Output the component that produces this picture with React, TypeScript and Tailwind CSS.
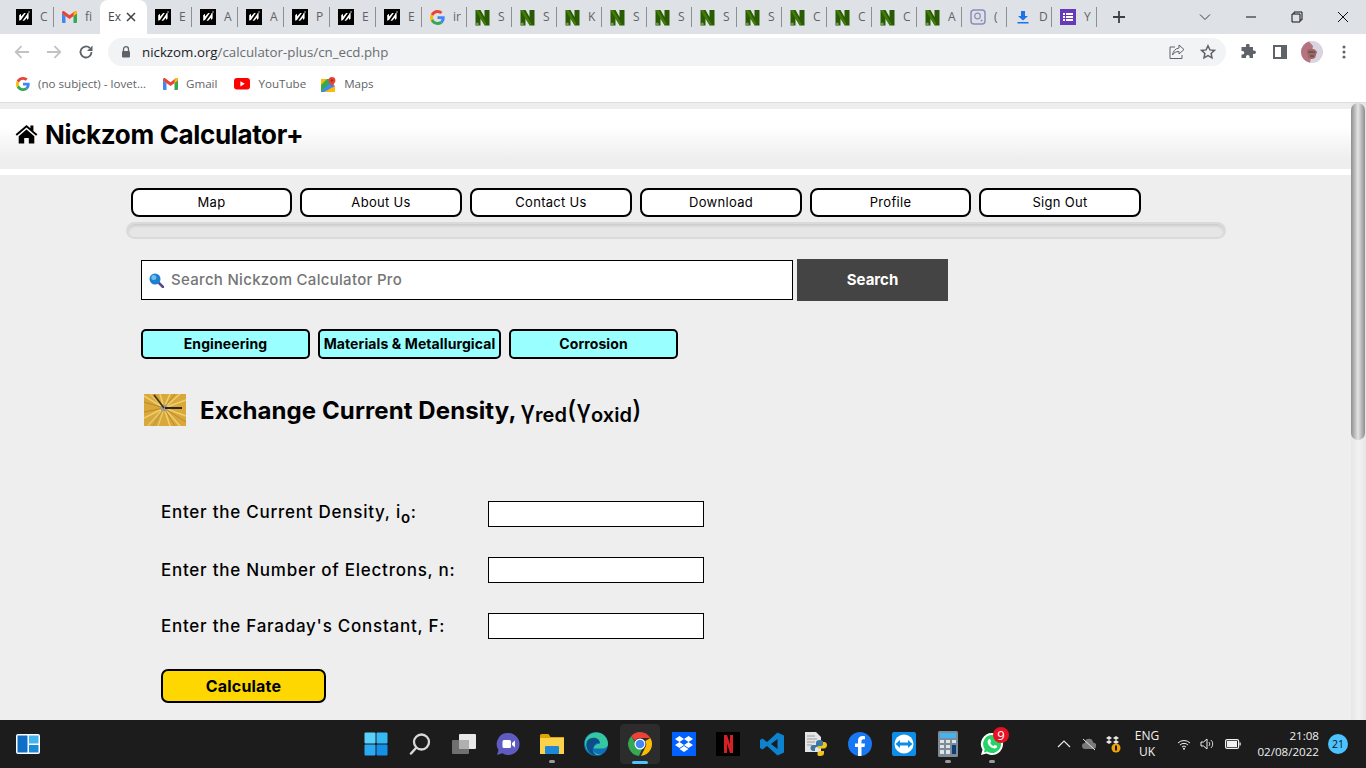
import React from "react";

const UI = "font-['Open_Sans','Noto_Sans',sans-serif]";

function NickzomIcon() {
  return (
    <svg width="16" height="16" viewBox="0 0 16 16" className="shrink-0">
      <rect width="16" height="16" fill="#000" />
      <path d="M3.200 11.800V6.200L5 4.800v2.600L8.200 4h1.600L5 11z" fill="#fff" />
      <path d="M6.500 11.800 11 5.500v-.7l1.600-1V9.500L11 11V8.800L8.200 11.800z" fill="#fff" />
      <circle cx="13" cy="3" r="0.700" fill="#fff" />
    </svg>
  );
}
function GreenN() {
  return (
    <svg width="15" height="17" viewBox="0 0 15 17" className="shrink-0">
      <path d="M0.500 1h5L9.500 8V1h5v15.500H9.800L5.500 9.500v7H0.500z" fill="#2b5a04" />
      <path d="M0.500 1h3L11.500 15l-1.700 1.500L3 5.500z" fill="#3f7d08" />
      <circle cx="2.300" cy="15" r="1.500" fill="#6f9a58" />
    </svg>
  );
}
function GoogleIcon({ size = 14 }: { size?: number }) {
  return (
    <svg width={size} height={size} viewBox="0 0 48 48" className="shrink-0">
      <path fill="#EA4335" d="M24 9.500c3.500 0 6.700 1.300 9.100 3.500l6.800-6.800C35.800 2.400 30.300 0 24 0 14.600 0 6.500 5.400 2.600 13.200l7.900 6.200C12.400 13.700 17.700 9.500 24 9.500z" />
      <path fill="#4285F4" d="M47 24.500c0-1.600-.1-3.100-.4-4.500H24v9h12.900c-.6 3-2.200 5.500-4.700 7.200l7.600 5.900C44.300 37.900 47 31.800 47 24.500z" />
      <path fill="#FBBC05" d="M10.500 28.600c-.5-1.400-.8-3-.8-4.600s.3-3.200.8-4.600l-7.900-6.200C.9 16.500 0 20.100 0 24s.9 7.500 2.600 10.800z" />
      <path fill="#34A853" d="M24 48c6.500 0 11.900-2.100 15.800-5.900l-7.600-5.900c-2.100 1.400-4.900 2.300-8.200 2.300-6.300 0-11.600-4.200-13.500-9.900l-7.900 6.200C6.500 42.600 14.600 48 24 48z" />
    </svg>
  );
}
function GmailIcon() {
  return (
    <svg width="15" height="12" viewBox="0 0 15 12" className="shrink-0">
      <path d="M0 2v9a1 1 0 0 0 1 1h2.500V5z" fill="#4285F4" />
      <path d="M15 2v9a1 1 0 0 1-1 1h-2.500V5z" fill="#34A853" />
      <path d="M0 2.500 7.500 8 15 2.500V1.500C15 .3 13.700-.4 12.800.3L7.500 4.300 2.200.3C1.300-.4 0 .3 0 1.500z" fill="#EA4335" />
      <path d="M11.500 2v3L15 2.500V1.500C15 .3 13.700-.4 12.800.3z" fill="#FBBC05" />
    </svg>
  );
}
function YouTubeIcon() {
  return (
    <svg width="16" height="12" viewBox="0 0 16 12" className="shrink-0">
      <rect width="16" height="11.500" rx="3" fill="#f00" />
      <path d="M6.400 3.200v5.200L10.800 5.800z" fill="#fff" />
    </svg>
  );
}
function MapsIcon() {
  return (
    <svg width="15" height="15" viewBox="0 0 15 15" className="shrink-0">
      <path d="M0 2h10v13H0z" fill="#34A853" />
      <path d="M0 15 10 5l4 4v6z" fill="#4285F4" />
      <path d="M0 2h6L0 8z" fill="#FBBC05" />
      <path d="M3 15 14 9v6z" fill="#FBBC05" />
      <path d="M11 0a3.400 3.400 0 0 1 3.400 3.400C14.400 5.800 11 9 11 9S7.600 5.800 7.600 3.400A3.400 3.400 0 0 1 11 0z" fill="#EA4335" />
      <circle cx="11" cy="3.400" r="1.200" fill="#a52714" />
    </svg>
  );
}
function LensIcon() {
  return (
    <svg width="16" height="16" viewBox="0 0 16 16" className="shrink-0">
      <rect x="1" y="1" width="14" height="14" rx="3" fill="none" stroke="#8a8fb8" strokeWidth="1.500" />
      <circle cx="7.500" cy="7" r="2.800" fill="none" stroke="#8a8fb8" strokeWidth="1.200" />
      <circle cx="11.500" cy="11.500" r="1" fill="#8a8fb8" />
    </svg>
  );
}
function DownloadIcon() {
  return (
    <svg width="16" height="16" viewBox="0 0 16 16" className="shrink-0">
      <path d="M6 2h4v5h3L8 11.500 3 7h3z" fill="#1a73e8" />
      <rect x="2.500" y="13" width="11" height="1.500" fill="#1a73e8" />
    </svg>
  );
}
function FormsIcon() {
  return (
    <svg width="16" height="16" viewBox="0 0 16 16" className="shrink-0">
      <rect width="16" height="16" fill="#673ab7" />
      <path d="M3 4h2v2H3zM6 4h7v2H6zM3 7h2v2H3zM6 7h7v2H6zM3 10h2v2H3zM6 10h7v2H6z" fill="#fff" />
    </svg>
  );
}

type TabT = { icon: React.ReactNode; label: string; w: string };
const nz = <NickzomIcon />;
const gn = <GreenN />;

function Tab({ icon, label, w, noSep }: TabT & { noSep?: boolean }) {
  return (
    <div className={`${w} relative flex h-[34px] shrink-0 items-center pl-2`}>
      {icon}
      <span className={`${UI} ml-[8px] text-[12px] leading-[16px] whitespace-nowrap text-[#5f6368]`}>{label}</span>
      {!noSep && <span className="absolute top-[7px] right-0 h-[20px] w-px bg-[#8c8f93]" />}
    </div>
  );
}

function TabStrip() {
  const a = "w-[46px]";
  const b = "w-[45px]";
  return (
    <div className="flex h-[34px] shrink-0 items-center bg-[#dee1e6] pl-[8px]">
      <Tab icon={nz} label="C" w={a} />
      <Tab icon={<GmailIcon />} label="fi" w={a} noSep />
      <div className="relative flex h-[34px] w-[47px] shrink-0 items-center rounded-t-[8px] bg-white pl-2">
        <span className={`${UI} text-[12px] leading-[16px] whitespace-nowrap text-[#45474a]`}>Ex</span>
        <svg width="12" height="12" viewBox="0 0 12 12" className="absolute left-[25px]">
          <path d="M2 2l8 8M10 2l-8 8" stroke="#3c4043" strokeWidth="1.500" />
        </svg>
      </div>
      <Tab icon={nz} label="E" w="w-[45px]" />
      <Tab icon={nz} label="A" w={a} />
      <Tab icon={nz} label="A" w={a} />
      <Tab icon={nz} label="P" w={a} />
      <Tab icon={nz} label="E" w={a} />
      <Tab icon={nz} label="E" w={a} />
      <Tab icon={<GoogleIcon size={15} />} label="ir" w={b} />
      <Tab icon={gn} label="S" w={b} />
      <Tab icon={gn} label="S" w={b} />
      <Tab icon={gn} label="K" w={b} />
      <Tab icon={gn} label="S" w={b} />
      <Tab icon={gn} label="S" w={b} />
      <Tab icon={gn} label="S" w={b} />
      <Tab icon={gn} label="S" w={b} />
      <Tab icon={gn} label="C" w={b} />
      <Tab icon={gn} label="C" w={b} />
      <Tab icon={gn} label="C" w={b} />
      <Tab icon={gn} label="A" w={b} />
      <Tab icon={<LensIcon />} label="(" w={b} />
      <Tab icon={<DownloadIcon />} label="D" w={b} />
      <Tab icon={<FormsIcon />} label="Y" w={b} />
      <svg width="14" height="14" viewBox="0 0 14 14" className="ml-[15px] shrink-0">
        <path d="M7 1v12M1 7h12" stroke="#3c4043" strokeWidth="1.800" />
      </svg>
      <div className="ml-auto flex h-full items-center">
        <div className="flex w-[46px] justify-center">
          <svg width="12" height="8" viewBox="0 0 12 8"><path d="M1 1.500l5 5 5-5" fill="none" stroke="#3c4043" strokeWidth="1" /></svg>
        </div>
        <div className="flex w-[46px] justify-center">
          <svg width="12" height="2" viewBox="0 0 12 2"><path d="M1 1h10" stroke="#111" strokeWidth="1" /></svg>
        </div>
        <div className="flex w-[46px] justify-center">
          <svg width="12" height="12" viewBox="0 0 12 12"><path d="M3 3V1h8v8H9M1 3h8v8H1z" fill="none" stroke="#111" strokeWidth="1" /></svg>
        </div>
        <div className="flex w-[46px] justify-center">
          <svg width="12" height="12" viewBox="0 0 12 12"><path d="M1 1l10 10M11 1L1 11" stroke="#111" strokeWidth="1" /></svg>
        </div>
      </div>
    </div>
  );
}

function Toolbar() {
  return (
    <div className="flex h-[37px] shrink-0 items-start bg-white pt-[4px]">
      <div className="flex h-[28px] w-[108px] shrink-0 items-center">
        <div className="flex w-[44px] justify-center">
          <svg width="16" height="14" viewBox="0 0 16 14"><path d="M15 7H2M7.500 1.200 1.700 7l5.800 5.800" fill="none" stroke="#c0c2c5" strokeWidth="1.800" /></svg>
        </div>
        <div className="flex w-[20px] justify-center">
          <svg width="16" height="14" viewBox="0 0 16 14"><path d="M1 7h13M8.500 1.200 14.300 7l-5.800 5.800" fill="none" stroke="#c0c2c5" strokeWidth="1.800" /></svg>
        </div>
        <div className="flex w-[44px] justify-center">
          <svg width="16" height="16" viewBox="0 0 16 16"><path d="M13.500 8A5.500 5.500 0 1 1 11.800 4" fill="none" stroke="#5f6368" strokeWidth="1.800" /><path d="M14.500 1.500v5.500H9z" fill="#5f6368" /></svg>
        </div>
      </div>
      <div className="flex h-[28px] w-[1118px] shrink-0 items-center rounded-full bg-[#f1f3f4] pr-[10px] pl-[13px]">
        <svg width="10" height="12" viewBox="0 0 10 12" className="shrink-0">
          <path d="M2.500 5V3.200a2.500 2.500 0 0 1 5 0V5" fill="none" stroke="#5f6368" strokeWidth="1.300" />
          <rect x="1" y="5" width="8" height="6.500" rx="1" fill="#5f6368" />
        </svg>
        <span className={`${UI} ml-[11px] text-[13.300px] leading-[18px] text-[#6a6d71]`}>
          <span className="text-[#202124]">nickzom.org</span>/calculator-plus/cn_ecd.php
        </span>
        <div className="ml-auto flex items-center gap-[15px]">
          <svg width="16" height="16" viewBox="0 0 16 16">
            <path d="M6 3H1v11.500h12V11" fill="none" stroke="#5f6368" strokeWidth="1" />
            <path d="M10 1l5 4.500-5 4.500V7.500C7 7.500 5 8.500 3.500 11c.5-3.500 2.500-6.500 6.500-7z" fill="none" stroke="#5f6368" strokeWidth="1" />
          </svg>
          <svg width="16" height="16" viewBox="0 0 16 16">
            <path d="M8 1.800l1.900 4.100 4.500.5-3.300 3 .9 4.400L8 11.600l-4 2.200.9-4.400-3.300-3 4.500-.5z" fill="none" stroke="#5f6368" strokeWidth="1.500" />
          </svg>
        </div>
      </div>
      <div className="flex h-[28px] flex-1 items-center">
        <div className="ml-[6px] flex w-[32px] justify-center">
          <svg width="16" height="16" viewBox="0 0 16 16"><path d="M6 1.500a1.800 1.800 0 0 1 3.600 0V3H13v3.500h1.200a1.800 1.800 0 0 1 0 3.600H13V14H9.600v-1.200a1.800 1.800 0 0 0-3.600 0V14H1.500v-3.500h1a1.800 1.800 0 0 0 0-3.600h-1V3H6z" fill="#5f6368" /></svg>
        </div>
        <div className="flex w-[32px] justify-center">
          <svg width="14" height="14" viewBox="0 0 14 14"><rect x="1" y="1" width="12" height="12" fill="none" stroke="#5f6368" strokeWidth="2" /><rect x="8" y="1" width="5" height="12" fill="#5f6368" /></svg>
        </div>
        <div className="flex w-[32px] justify-center">
          <svg width="22" height="22" viewBox="0 0 22 22">
            <circle cx="11" cy="11" r="11" fill="#d9d3e2" />
            <path d="M0 11A11 11 0 0 1 8 .5L12 5 9 21.700A11 11 0 0 1 0 11z" fill="#b5727f" />
            <path d="M6 9c3-2 8-2 10 2l-2 6c-3 2-6 1-7-1z" fill="#9c6a66" />
            <path d="M7 11h7M9 15h4" stroke="#5b3a3a" strokeWidth="1.200" />
          </svg>
        </div>
        <div className="flex w-[32px] justify-center">
          <svg width="4" height="14" viewBox="0 0 4 14"><circle cx="2" cy="2" r="1.500" fill="#5f6368" /><circle cx="2" cy="7" r="1.500" fill="#5f6368" /><circle cx="2" cy="12" r="1.500" fill="#5f6368" /></svg>
        </div>
      </div>
    </div>
  );
}

function Bookmark({ icon, label }: { icon: React.ReactNode; label: string }) {
  return (
    <div className="flex items-center gap-[8px]">
      {icon}
      <span className={`${UI} text-[11.600px] leading-[16px] text-[#5f6368]`}>{label}</span>
    </div>
  );
}

function Bookmarks() {
  return (
    <div className="flex h-[32px] shrink-0 items-center gap-[17px] border-b border-[#dadce0] bg-white pb-[5px] pl-[16px]">
      <Bookmark icon={<GoogleIcon />} label="(no subject) - lovet..." />
      <Bookmark icon={<GmailIcon />} label="Gmail" />
      <Bookmark icon={<YouTubeIcon />} label="YouTube" />
      <div className="-ml-[2px]">
        <Bookmark icon={<MapsIcon />} label="Maps" />
      </div>
    </div>
  );
}

const FONT = "font-['Inter','Noto_Sans',sans-serif]";

function NavButton({ label, w }: { label: string; w: string }) {
  return (
    <div className={`${w} flex h-[29px] shrink-0 items-center justify-center rounded-[8px] border-2 border-black bg-white text-[13px] font-normal tracking-[0.3px] text-black`}>
      {label}
    </div>
  );
}

function CatButton({ label, w }: { label: string; w: string }) {
  return (
    <div className={`${w} flex h-[30px] shrink-0 items-center justify-center rounded-[5px] border-2 border-black bg-[#99ffff] pb-[2px] text-[14px] font-bold tracking-[0.1px] whitespace-nowrap text-black`}>
      {label}
    </div>
  );
}

function Field({ label, sub, mb, nudge }: { label: string; sub?: string; mb: string; nudge: string }) {
  return (
    <div className={`flex h-[26px] items-center ${mb}`}>
      <div className={`w-[327px] shrink-0 text-[17px] font-medium tracking-[0.75px] whitespace-nowrap text-black ${nudge}`}>
        {label}
        {sub && <sub className="relative top-[5px] text-[15px] font-semibold">{sub}</sub>}
        :
      </div>
      <div className="h-[26px] w-[216px] border border-black bg-white" />
    </div>
  );
}

function ClockImage() {
  return (
    <svg width="42" height="32" viewBox="0 0 42 32" className="shrink-0">
      <rect width="42" height="32" fill="#d9a83a" />
      <path d="M20 14L0 2M20 14L6 0M20 14L16 0M20 14L26 0M20 14L36 0M20 14L42 6M20 14L42 22M20 14L36 32M20 14L26 32M20 14L14 32M20 14L4 32M20 14L0 24" stroke="#f0cf6f" strokeWidth="1.500" />
      <path d="M20 14L0 8M20 14L11 0M20 14L31 0M20 14L42 28M20 14L31 32M20 14L9 32M20 14L0 18" stroke="#b98a2c" strokeWidth="1" />
      <path d="M4 0h8l8 14zM4 32l16-18-6 18z" fill="#c9a24a" fillOpacity="0.35" />
      <circle cx="20" cy="14" r="3.500" fill="#a89a80" />
      <path d="M20 14L10 1" stroke="#3d3119" strokeWidth="1.500" />
      <path d="M21 14H38" stroke="#2f2614" strokeWidth="2" />
    </svg>
  );
}

function Page() {
  return (
    <div className={`${FONT} flex min-h-0 flex-1 overflow-hidden bg-[#eeeeee]`}>
      <div className="w-[1351px] shrink-0">
        <div className="mt-[6px] flex h-[60px] items-start bg-gradient-to-b from-white from-[30%] to-[#eeeeee] to-[85%] pt-[11px] pl-[16px]">
          <svg width="23" height="20" viewBox="0 0 23 20" className="mt-[4px] -ml-[1px] shrink-0">
            <path d="M11.500 1 0.600 10.300l1.300 1.500L11.500 3.600l9.600 8.200 1.300-1.500-4-3.400V1.600h-3v2.700z" fill="#000" />
            <path d="M3.700 12.200 11.500 5.600l7.800 6.600V19.500h-5.500v-5.500h-4.600v5.500H3.700z" fill="#000" />
          </svg>
          <div className="ml-[7px] text-[26px] leading-[30px] font-bold tracking-[-0.35px] text-black">Nickzom Calculator+</div>
        </div>
        <div className="h-[6px] bg-white" />
        <div className="mt-[13px] ml-[131px] flex gap-[8px]">
          <NavButton label="Map" w="w-[161px]" />
          <NavButton label="About Us" w="w-[162px]" />
          <NavButton label="Contact Us" w="w-[162px]" />
          <NavButton label="Download" w="w-[162px]" />
          <NavButton label="Profile" w="w-[161px]" />
          <NavButton label="Sign Out" w="w-[162px]" />
        </div>
        <div className="mt-[5px] ml-[126px] h-[17px] w-[1100px] rounded-full border-2 border-[#dadada] bg-[#e6e6e6] shadow-[inset_0_2px_3px_rgba(0,0,0,0.12)]" />
        <div className="mt-[20px] ml-[141px] flex items-center gap-[4px]">
          <div className="flex h-[40px] w-[652px] items-center border border-black bg-white pl-[7px]">
            <svg width="15" height="15" viewBox="0 0 15 15" className="shrink-0">
              <path d="M9.500 9.500l4.500 4.500" stroke="#5b4a8a" strokeWidth="2.500" strokeLinecap="round" />
              <circle cx="6" cy="6" r="5.500" fill="#1f7fd0" />
              <circle cx="4.800" cy="4.500" r="2.500" fill="#6cc0f0" />
            </svg>
            <span className="ml-[7px] text-[15px] font-medium tracking-[0.3px] text-[#757575]">Search Nickzom Calculator Pro</span>
          </div>
          <div className="flex h-[42px] w-[151px] items-center justify-center bg-[#444444] text-[15px] font-bold text-white">Search</div>
        </div>
        <div className="mt-[28px] ml-[141px] flex gap-[8px]">
          <CatButton label="Engineering" w="w-[169px]" />
          <CatButton label="Materials & Metallurgical" w="w-[183px]" />
          <CatButton label="Corrosion" w="w-[169px]" />
        </div>
        <div className="mt-[35px] ml-[144px] flex h-[32px] items-center">
          <ClockImage />
          <div className="ml-[14px] flex items-baseline text-[24px] leading-[32px] font-bold tracking-[0.1px] whitespace-nowrap text-black">
            Exchange Current Density,
            <span className="ml-[4px] text-[25px] font-medium">γ</span>
            <sub className="relative top-[3px] align-baseline text-[20px] font-semibold">red</sub>
            <span className="relative -top-[1px] text-[25px] font-medium">(γ</span>
            <sub className="relative top-[3px] align-baseline text-[20px] font-semibold">oxid</sub>
            <span className="relative -top-[1px] text-[25px] font-medium">)</span>
          </div>
        </div>
        <div className="mt-[75px] ml-[161px]">
          <Field label="Enter the Current Density, i" sub="o" mb="mb-[30px]" nudge="pb-[2px]" />
          <Field label="Enter the Number of Electrons, n" mb="mb-[30px]" nudge="pt-[2px]" />
          <Field label="Enter the Faraday's Constant, F" mb="mb-[30px]" nudge="pt-[2px]" />
          <div className="flex h-[34px] w-[165px] items-center justify-center rounded-[7px] border-2 border-black bg-[#ffd700] text-[16px] font-bold tracking-[0.2px] text-black">Calculate</div>
        </div>
      </div>
      <div className="w-[15px] shrink-0 bg-gradient-to-r from-[#e6e6e6] via-[#f2f2f2] to-[#e6e6e6]">
        <div className="h-[337px] w-[14px] rounded-full bg-gradient-to-r from-[#8e8e8e] via-[#e4e4e4] to-[#8e8e8e]" />
      </div>
    </div>
  );
}

function Slot({ children, dot, active }: { children: React.ReactNode; dot?: boolean; active?: boolean }) {
  return (
    <div className="relative flex h-[40px] w-[44px] shrink-0 items-center justify-center">
      {active && <span className="absolute inset-y-0 left-[2px] w-[40px] rounded-[4px] bg-[#2c2c2c]" />}
      <span className="relative flex">{children}</span>
      {dot && <span className="absolute bottom-[1px] h-[3px] w-[6px] rounded-full bg-[#9a9a9a]" />}
      {active && <span className="absolute bottom-0 h-[3px] w-[16px] rounded-full bg-[#4cc2ff]" />}
    </div>
  );
}

function Taskbar() {
  return (
    <div className={`${UI} flex h-[48px] shrink-0 items-center bg-[#1c1c1c] text-white`}>
      <svg width="24" height="20" viewBox="0 0 24 20" className="ml-[16px] shrink-0">
        <rect width="24" height="20" rx="2" fill="#ffffff" />
        <rect x="1.500" y="1.500" width="10" height="17" fill="#0f6fc6" />
        <rect x="13" y="1.500" width="9.500" height="8" fill="#43b4ee" />
        <rect x="13" y="11" width="9.500" height="7.500" fill="#1b8ad8" />
      </svg>
      <div className="ml-[314px] flex items-center">
        <Slot>
          <svg width="24" height="24" viewBox="0 0 24 24">
            <rect x="0.500" y="0.500" width="11" height="11" rx="1" fill="#5ad1fb" />
            <rect x="12.500" y="0.500" width="11" height="11" rx="1" fill="#35b8f6" />
            <rect x="0.500" y="12.500" width="11" height="11" rx="1" fill="#2aaaf2" />
            <rect x="12.500" y="12.500" width="11" height="11" rx="1" fill="#1590e8" />
          </svg>
        </Slot>
        <Slot>
          <svg width="22" height="22" viewBox="0 0 22 22">
            <circle cx="12.500" cy="9" r="7.500" fill="none" stroke="#d8d8d8" strokeWidth="2.300" />
            <path d="M7 15L2 20.500" stroke="#d8d8d8" strokeWidth="2.500" strokeLinecap="round" />
          </svg>
        </Slot>
        <Slot>
          <svg width="24" height="20" viewBox="0 0 24 20">
            <rect x="7" y="0" width="17" height="15" rx="1" fill="#e8e8e8" />
            <rect x="0" y="6" width="17" height="14" rx="1" fill="#707070" />
            <rect x="7" y="6" width="10" height="9" fill="#b0b0b0" />
          </svg>
        </Slot>
        <Slot>
          <svg width="24" height="24" viewBox="0 0 24 24">
            <path d="M12.500 1a11 11 0 1 1-6 20.200L1 23l1.500-5A11 11 0 0 1 12.500 1z" fill="#5e5cc0" />
            <rect x="6.500" y="8" width="8.500" height="8" rx="1.500" fill="#fff" />
            <path d="M16 11l3-2.500v7L16 13z" fill="#fff" />
          </svg>
        </Slot>
        <Slot dot>
          <svg width="24" height="20" viewBox="0 0 24 20">
            <path d="M0 1.500A1.500 1.500 0 0 1 1.500 0h7l2 3H24v17H0z" fill="#e2a400" />
            <rect y="4" width="24" height="16" fill="#fbd24a" />
            <rect x="5" y="12" width="14" height="8" rx="1" fill="#1e88d8" />
          </svg>
        </Slot>
        <Slot>
          <svg width="24" height="24" viewBox="0 0 24 24">
            <circle cx="12" cy="12" r="12" fill="#0f6fb8" />
            <path d="M1 9C3 2 10-1 16 1c5 2 8 6 8 11 0 3-3 5-7 4.500H9.500c.5-3 3-5 6-4.500 1-3-2-6-5-5C6 8 6 15 9 19c2.500 3 6 4 9 3-8 4-17-2-17-11z" fill="#35c7a0" />
            <path d="M3 9c4-5 12-4 13 2-3-1-6 1-7 5-1 4 2 7 6 8C7 25 0 17 3 9z" fill="#0b4f8a" />
          </svg>
        </Slot>
        <Slot active>
          <svg width="24" height="24" viewBox="0 0 24 24">
            <path d="M12 0a12 12 0 0 1 10.400 6H12a6 6 0 0 0-5.200 3L3.300 3.900A12 12 0 0 1 12 0z" fill="#EA4335" />
            <path d="M22.400 6A12 12 0 0 1 13 24l4.200-8.500A6 6 0 0 0 17.200 9z" fill="#FBBC05" />
            <path d="M3.300 3.900 8.500 13a6 6 0 0 0 6 3L11 24A12 12 0 0 1 3.300 3.900z" fill="#34A853" />
            <circle cx="12" cy="12" r="5.500" fill="#fff" />
            <circle cx="12" cy="12" r="4.300" fill="#4285F4" />
          </svg>
        </Slot>
        <Slot>
          <div className="flex h-[24px] w-[24px] items-center justify-center bg-[#0061fe]">
            <svg width="18" height="16" viewBox="0 0 18 16">
              <path d="M4.500 0 9 3 4.500 6 0 3zM13.500 0 18 3l-4.500 3L9 3zM4.500 6 9 9l-4.500 3L0 9zM13.500 6 18 9l-4.500 3L9 9zM4.500 13 9 10l4.500 3L9 16z" fill="#fff" />
            </svg>
          </div>
        </Slot>
        <Slot>
          <svg width="24" height="24" viewBox="0 0 24 24">
            <rect width="24" height="24" fill="#000" />
            <path d="M8 3h3l3 9V3h3v18h-3l-3-9.500V21H8z" fill="#d81f26" />
          </svg>
        </Slot>
        <Slot>
          <svg width="24" height="24" viewBox="0 0 24 24">
            <path d="M17.500 0.500 24 3.500v17l-6.500 3L7 14l-4.500 3.500L0 16v-8l2.500-1.500L7 10zM17.500 7 11 12l6.500 5z" fill="#0d82ce" />
          </svg>
        </Slot>
        <Slot>
          <svg width="24" height="26" viewBox="0 0 24 26">
            <path d="M1 1h11l5 5v15H1z" fill="#e4e4e4" />
            <path d="M3 5h8M3 8h10M3 11h8M3 14h5" stroke="#9a9a9a" strokeWidth="1" />
            <path d="M16 9c-3 0-4 1-4 3v2h-3c-2 0-2.500 2-2.500 3.500S8 20 9 20h2v-2c0-1.500 1-2 2.500-2h4c1 0 2-1 2-2v-2c0-2-1.500-3-3.500-3z" fill="#3b76a6" />
            <path d="M16 25c3 0 4-1 4-3v-2h-1.500v0h-2c-2 0-3 .7-3 2v2c0 .5 1 1 2.500 1zM14 17.500h6c2 0 3-2 3-3.500s-1-3-2.500-3H19v2c0 1.500-1 2-2.500 2h-3z" fill="#f0c419" />
          </svg>
        </Slot>
        <Slot>
          <svg width="24" height="24" viewBox="0 0 24 24">
            <circle cx="12" cy="12" r="12" fill="#1877f2" />
            <path d="M13.500 24v-9h3l.5-3.500h-3.500V9.300c0-1 .5-2 2-2H17V4.200C16.500 4.100 15.500 4 14.500 4 11.800 4 10 5.600 10 8.600v2.900H7V15h3v9z" fill="#fff" />
          </svg>
        </Slot>
        <Slot>
          <svg width="24" height="24" viewBox="0 0 24 24">
            <rect width="24" height="24" rx="2" fill="#0e8ee9" />
            <circle cx="12" cy="12" r="9.500" fill="#fff" />
            <path d="M3.500 12 8 8v2.500h8V8l4.500 4-4.500 4v-2.500H8V16z" fill="#0e8ee9" />
          </svg>
        </Slot>
        <Slot dot>
          <svg width="20" height="26" viewBox="0 0 20 26">
            <rect width="20" height="26" rx="1.500" fill="#7f8b96" />
            <rect x="2" y="2" width="16" height="5" fill="#43b4ee" />
            <path d="M2 9h4v3H2zM8 9h4v3H8zM14 9h4v3h-4zM2 14h4v3H2zM8 14h4v3H8zM2 19h4v4H2zM8 19h4v4H8z" fill="#dde3e8" />
            <rect x="14" y="14" width="4" height="9" fill="#0b3f78" />
          </svg>
        </Slot>
        <Slot dot>
          <svg width="24" height="24" viewBox="0 0 24 24">
            <path d="M12 1a11 11 0 1 1-5.500 20.500L1 23l1.500-5.300A11 11 0 0 1 12 1z" fill="#fff" />
            <path d="M12 3a9 9 0 1 1-4.800 16.600L3.800 20.500l1-3.300A9 9 0 0 1 12 3z" fill="#25d366" />
            <path d="M8.500 7.500c1-1 1.800-.5 2 .2l.6 1.600c.1.600-.7 1.300-.8 1.600.6 1.300 1.700 2.400 3.200 3 .4-.3 1-1.100 1.500-1l1.700.8c.7.400.6 1.100.1 1.800-1 1.200-2.500 1.200-4.200.5-2.300-.9-4-2.700-4.800-4.800-.4-1.300-.2-2.600.7-3.700z" fill="#fff" />
          </svg>
          <span className="absolute top-[-5px] right-[-5px] flex h-[16px] w-[16px] items-center justify-center rounded-full bg-[#e81123] text-[13px] leading-[16px] text-white">9</span>
        </Slot>
      </div>
      <div className="ml-[43px] flex items-center">
        <svg width="14" height="8" viewBox="0 0 14 8" className="shrink-0"><path d="M1 7l6-6 6 6" fill="none" stroke="#e8e8e8" strokeWidth="1.200" /></svg>
        <svg width="14" height="13" viewBox="0 0 14 13" className="ml-[11px] shrink-0">
          <path d="M3 11a3 3 0 0 1 0-6 4 4 0 0 1 8-.5 3 3 0 0 1 0 6.500z" fill="#7a7a7a" />
          <path d="M1 1l12 11" stroke="#e8e8e8" strokeWidth="1" />
        </svg>
        <svg width="16" height="18" viewBox="0 0 16 18" className="ml-[9px] shrink-0">
          <path d="M1 3l3-2 3 2-3 2zM8 3l3-2 3 2-3 2zM1 7l3-2 3 2-3 2zM8 7l3-2 3 2-3 2z" fill="#e8e8e8" />
          <circle cx="11" cy="13" r="4.500" fill="#f0a30a" />
          <rect x="10" y="10.500" width="2" height="5" fill="#1c1c1c" />
        </svg>
        <div className="ml-[11px] flex w-[30px] flex-col items-center text-[12px] leading-[16px] text-[#f0f0f0]">
          <span>ENG</span>
          <span>UK</span>
        </div>
        <svg width="14" height="11" viewBox="0 0 14 11" className="ml-[15px] shrink-0">
          <path d="M1 4a8.500 8.500 0 0 1 12 0M3 6a5.700 5.700 0 0 1 8 0M5 8a2.800 2.800 0 0 1 4 0" fill="none" stroke="#f0f0f0" strokeWidth="1" />
          <circle cx="7" cy="9.800" r="1" fill="#f0f0f0" />
        </svg>
        <svg width="14" height="14" viewBox="0 0 14 14" className="ml-[9px] shrink-0">
          <path d="M1 5h2.500L7 2v10L3.500 9H1z" fill="none" stroke="#f0f0f0" strokeWidth="1" />
          <path d="M9 5a3 3 0 0 1 0 4M11 3a5.500 5.500 0 0 1 0 8" fill="none" stroke="#d0d0d0" strokeWidth="1" />
        </svg>
        <svg width="16" height="10" viewBox="0 0 16 10" className="ml-[11px] shrink-0">
          <rect x="0.600" y="0.600" width="13" height="8.800" rx="1.500" fill="none" stroke="#f0f0f0" strokeWidth="1.200" />
          <rect x="2" y="2" width="10" height="6" fill="#f0f0f0" />
          <rect x="14.500" y="3.500" width="1.200" height="3" fill="#f0f0f0" />
        </svg>
        <div className="ml-[9px] flex w-[69px] flex-col items-end text-[11.600px] leading-[16px] text-[#f0f0f0]">
          <span>21:08</span>
          <span className="whitespace-nowrap">02/08/2022</span>
        </div>
        <div className="ml-[9px] flex h-[20px] w-[20px] items-center justify-center rounded-full bg-[#4cc2ff] text-[10.500px] leading-[14px] text-[#111]">21</div>
      </div>
    </div>
  );
}

export default function App() {
  return (
    <div className="flex h-[768px] w-[1366px] flex-col overflow-hidden bg-white">
      <TabStrip />
      <Toolbar />
      <Bookmarks />
      <Page />
      <Taskbar />
    </div>
  );
}
